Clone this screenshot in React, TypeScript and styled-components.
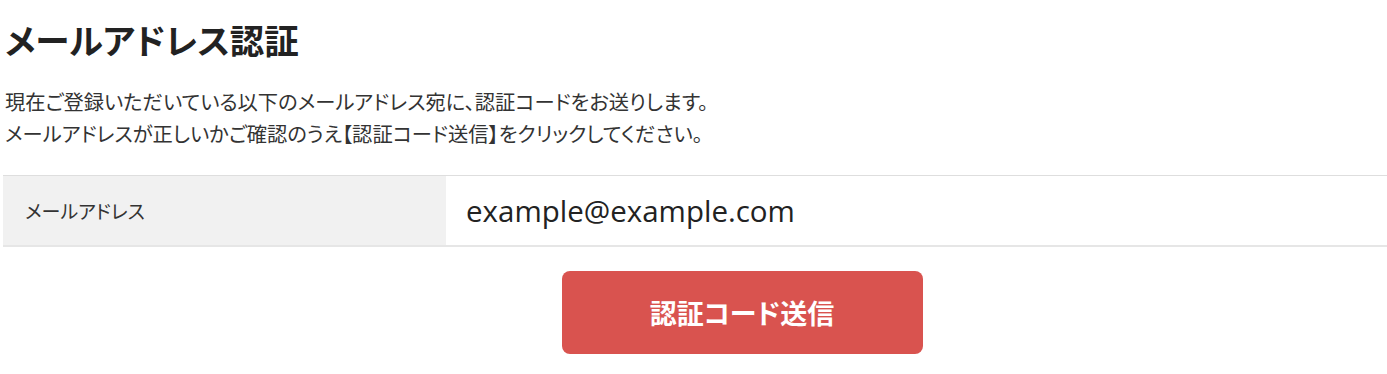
import React from 'react'
import styled, { createGlobalStyle } from 'styled-components'

const GlobalStyle = createGlobalStyle`
   html, body {
      margin: 0;
      padding: 0;
      background: #fff;
   }
   body {
      font-family: 'Noto Sans CJK JP', 'Noto Sans', sans-serif;
      color: #333;
      font-feature-settings: 'palt';
   }
`

const Page = styled.div`
   padding: 13px 0 0 3px;
`

const Title = styled.h1`
   margin: 0 0 0 2px;
   font-size: 34.5px;
   line-height: 52px;
   font-weight: 700;
   color: #222;
`

const Lead = styled.p`
   margin: 20px 0 0 2px;
   font-size: 20.3px;
   line-height: 32px;
   color: #333;
`

const Table = styled.div`
   display: grid;
   grid-template-columns: 443px 1fr;
   margin-top: 26px;
   border-top: 1px solid #dedede;
   border-bottom: 2px solid #e6e6e6;
`

const Label = styled.div`
   display: flex;
   align-items: center;
   height: 69px;
   padding-left: 22px;
   background: #f1f1f1;
   font-size: 19px;
   color: #333;
`

const Value = styled.div`
   display: flex;
   align-items: center;
   padding-left: 20px;
   font-family: 'Open Sans', 'Noto Sans', sans-serif;
   font-size: 29.5px;
   color: #222;
`

const Actions = styled.div`
   display: flex;
   justify-content: center;
   padding: 24px 0 0 94px;
`

const SubmitButton = styled.button`
   width: 361px;
   height: 83px;
   border: none;
   border-radius: 8px;
   background: #d9534f;
   color: #fff;
   font-family: 'Noto Sans CJK JP', sans-serif;
   font-feature-settings: 'palt';
   font-size: 27px;
   font-weight: 700;
   cursor: pointer;
`

export default function App() {
   return (
      <>
         <GlobalStyle />
         <Page>
            <Title>メールアドレス認証</Title>
            <Lead>
               現在ご登録いただいている以下のメールアドレス宛に、認証コードをお送りします。
               <br />
               メールアドレスが正しいかご確認のうえ【認証コード送信】をクリックしてください。
            </Lead>
            <Table>
               <Label>メールアドレス</Label>
               <Value>example@example.com</Value>
            </Table>
            <Actions>
               <SubmitButton type="button">認証コード送信</SubmitButton>
            </Actions>
         </Page>
      </>
   )
}
